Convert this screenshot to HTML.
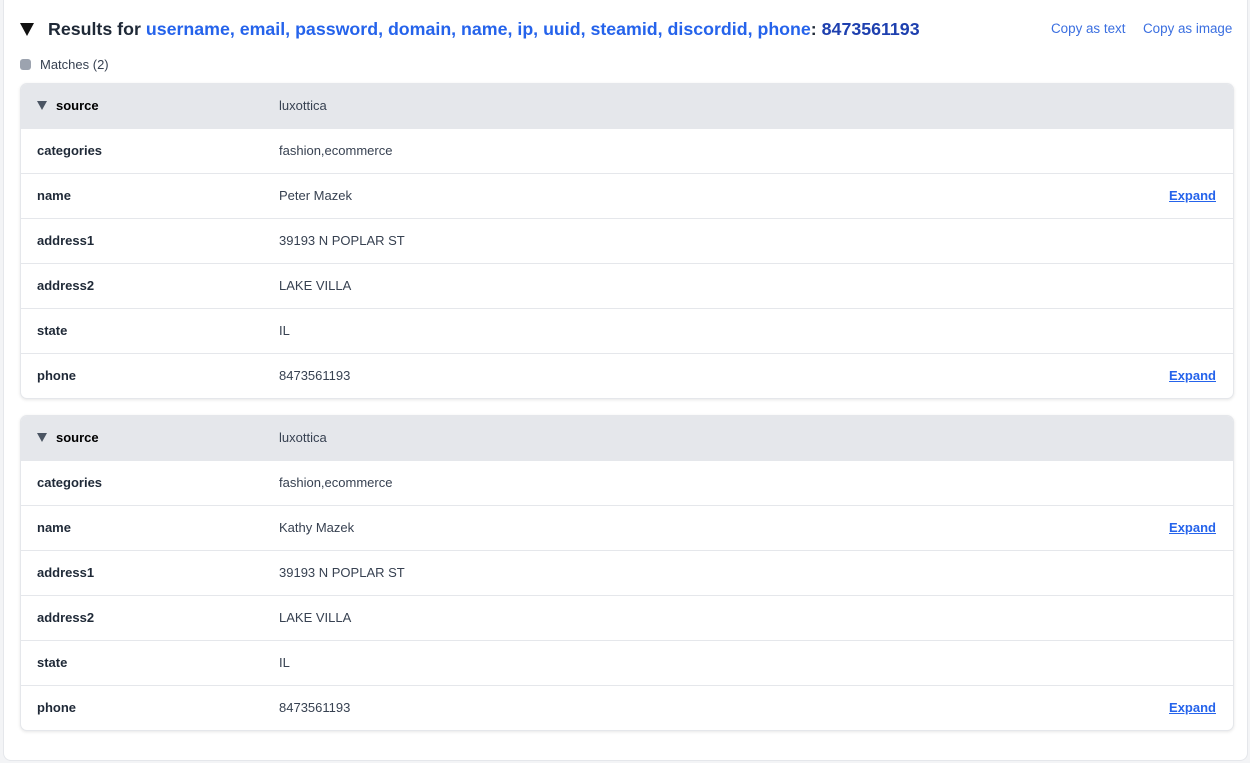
<!DOCTYPE html>
<html><head><meta charset="utf-8"><style>
*{box-sizing:border-box;margin:0;padding:0}
body{width:1250px;height:763px;background:#f3f4f6;font-family:"Liberation Sans",sans-serif;position:relative;overflow:hidden}
.outer{position:absolute;left:3px;top:-10px;width:1245px;height:771px;background:#fff;border:1px solid #e5e7eb;border-radius:8px}
.title{position:absolute;left:20px;top:19px;font-size:17.8px;font-weight:bold;color:#1f2937;white-space:nowrap}
.title .tri{display:inline-block;width:0;height:0;border-left:7px solid transparent;border-right:7px solid transparent;border-top:13px solid #111;margin-right:14px;vertical-align:-1px}
.title .b{color:#2563eb}.title .d{color:#1e40af}
.copy{position:absolute;top:21px;font-size:13.4px;color:#3b6fe0}
.matches{position:absolute;left:20px;top:57px;font-size:13px;color:#374151}
.matches i{display:inline-block;width:11px;height:11px;background:#9ca3af;border-radius:3px;margin-right:9px;vertical-align:-1px}
.card{position:absolute;left:20px;width:1214px;border:1px solid #e5e7eb;border-radius:7px;box-shadow:0 1px 3px rgba(0,0,0,.1);overflow:hidden;background:#fff}
.row{height:45px;border-top:1px solid #e5e7eb;position:relative;font-size:13px}
.row:first-child{border-top:none;height:44px;background:#e5e7eb}
.k{position:absolute;left:16px;top:14px;font-weight:bold;color:#1f2937}
.v{position:absolute;left:258px;top:14px;color:#374151}
.e{position:absolute;right:17px;top:14px;color:#2563eb;font-weight:bold;text-decoration:underline}
.st{display:inline-block;width:0;height:0;border-left:5px solid transparent;border-right:5px solid transparent;border-top:9px solid #4b5563;margin-right:9px}
.row:first-child .k{color:#000}
</style></head><body>
<div class="outer"></div>
<div class="title"><span class="tri"></span>Results for <span class="b">username, email, password, domain, name, ip, uuid, steamid, discordid, phone</span>: <span class="d">8473561193</span></div>
<div class="copy" style="left:1051px">Copy as text</div>
<div class="copy" style="left:1143px">Copy as image</div>
<div class="matches"><i></i>Matches (2)</div>
<div class="card" style="top:83px">
<div class="row"><span class="k"><span class="st"></span>source</span><span class="v">luxottica</span></div>
<div class="row"><span class="k">categories</span><span class="v">fashion,ecommerce</span></div>
<div class="row"><span class="k">name</span><span class="v">Peter Mazek</span><span class="e">Expand</span></div>
<div class="row"><span class="k">address1</span><span class="v">39193 N POPLAR ST</span></div>
<div class="row"><span class="k">address2</span><span class="v">LAKE VILLA</span></div>
<div class="row"><span class="k">state</span><span class="v">IL</span></div>
<div class="row"><span class="k">phone</span><span class="v">8473561193</span><span class="e">Expand</span></div>
</div>
<div class="card" style="top:415px">
<div class="row"><span class="k"><span class="st"></span>source</span><span class="v">luxottica</span></div>
<div class="row"><span class="k">categories</span><span class="v">fashion,ecommerce</span></div>
<div class="row"><span class="k">name</span><span class="v">Kathy Mazek</span><span class="e">Expand</span></div>
<div class="row"><span class="k">address1</span><span class="v">39193 N POPLAR ST</span></div>
<div class="row"><span class="k">address2</span><span class="v">LAKE VILLA</span></div>
<div class="row"><span class="k">state</span><span class="v">IL</span></div>
<div class="row"><span class="k">phone</span><span class="v">8473561193</span><span class="e">Expand</span></div>
</div>
</body></html>
